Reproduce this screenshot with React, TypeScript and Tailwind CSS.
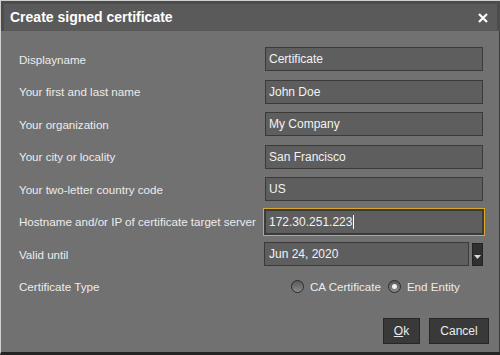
import React from "react";

const font = { fontFamily: '"Liberation Sans", Arial, sans-serif' };

interface FieldProps {
  label: string;
  value: string;
  focused?: boolean;
}

const Row: React.FC<{ label: string; children: React.ReactNode }> = ({ label, children }) => (
  <div className="flex h-[32.5px] items-center">
    <div className="w-[264px] shrink-0 whitespace-nowrap pl-[18px] text-[11.6px] text-[#ececec]">{label}</div>
    <div className="flex flex-1 items-center">{children}</div>
  </div>
);

const Field: React.FC<FieldProps> = ({ label, value, focused }) => (
  <Row label={label}>
    <div
      className={`flex h-[24px] w-[218px] items-center border border-[#3a3a3a] bg-[#5e5e5e] pl-[3px] text-[12px] text-[#f2f2f2] ${
        focused ? "shadow-[0_0_0_1px_#3c3c3c,0_0_0_2px_#d9a72b]" : ""
      }`}
    >
      {value}
      {focused && <span className="ml-[1px] h-[14px] w-[1px] bg-white" />}
    </div>
  </Row>
);

const Radio: React.FC<{ label: string; checked?: boolean }> = ({ label, checked }) => (
  <div className="flex items-center gap-[6px]">
    <div className="flex h-[13px] w-[13px] items-center justify-center rounded-full border border-[#2c2c2c] bg-gradient-to-b from-[#5a5a5a] to-[#8a8a8a]">
      {checked && <div className="h-[5px] w-[5px] rounded-full bg-[#f0f0f0]" />}
    </div>
    <span className="text-[11.6px] text-[#ececec]">{label}</span>
  </div>
);

export default function App() {
  return (
    <div
      className="flex h-[355px] w-[500px] flex-col border-l border-t border-[#cfcfcf] border-b-[3px] border-b-[#242424] bg-[#717171]"
      style={font}
    >
      {/* Title bar */}
      <div className="bg-[#4c4c4c] px-[3px] pt-[3px]">
        <div className="flex h-[27px] items-center justify-between bg-[#5a5a5a] pl-[6px] pr-[9px]">
          <span className="text-[14px] font-bold text-white">Create signed certificate</span>
          <svg width="10" height="10" viewBox="0 0 10 10">
            <path d="M1 1 L9 9 M9 1 L1 9" stroke="white" strokeWidth="2.2" />
          </svg>
        </div>
      </div>

      {/* Form */}
      <div className="flex flex-1 flex-col border-r border-[#3c3c3c] pt-[12px]">
        <Field label="Displayname" value="Certificate" />
        <Field label="Your first and last name" value="John Doe" />
        <Field label="Your organization" value="My Company" />
        <Field label="Your city or locality" value="San Francisco" />
        <Field label="Your two-letter country code" value="US" />
        <Field label="Hostname and/or IP of certificate target server" value="172.30.251.223" focused />
        <Row label="Valid until">
          <div className="ml-[-1px] flex h-[24px] w-[205px] items-center border border-[#3a3a3a] bg-[#5e5e5e] pl-[4px] text-[12px] text-[#f2f2f2]">
            Jun 24, 2020
          </div>
          <div className="ml-[3px] flex h-[23px] w-[11px] items-end justify-center border border-[#232323] bg-[#303030] pb-[6px]">
            <svg width="7" height="4" viewBox="0 0 7 4">
              <path d="M0 0 L7 0 L3.5 4 Z" fill="#d8d8d8" />
            </svg>
          </div>
        </Row>
        <Row label="Certificate Type">
          <div className="flex items-center gap-[7px] pl-[26px]">
            <Radio label="CA Certificate" />
            <Radio label="End Entity" checked />
          </div>
        </Row>

        <div className="mt-[15px] flex justify-end gap-[9px] pr-[10px]">
          <button className="flex h-[26px] w-[37px] items-center justify-center border border-[#262626] bg-[#393939] text-[12px] text-[#ececec]">
            <span>
              <span className="underline">O</span>k
            </span>
          </button>
          <button className="flex h-[26px] w-[60px] items-center justify-center border border-[#262626] bg-[#393939] text-[12px] text-[#ececec]">
            Cancel
          </button>
        </div>
      </div>
    </div>
  );
}
